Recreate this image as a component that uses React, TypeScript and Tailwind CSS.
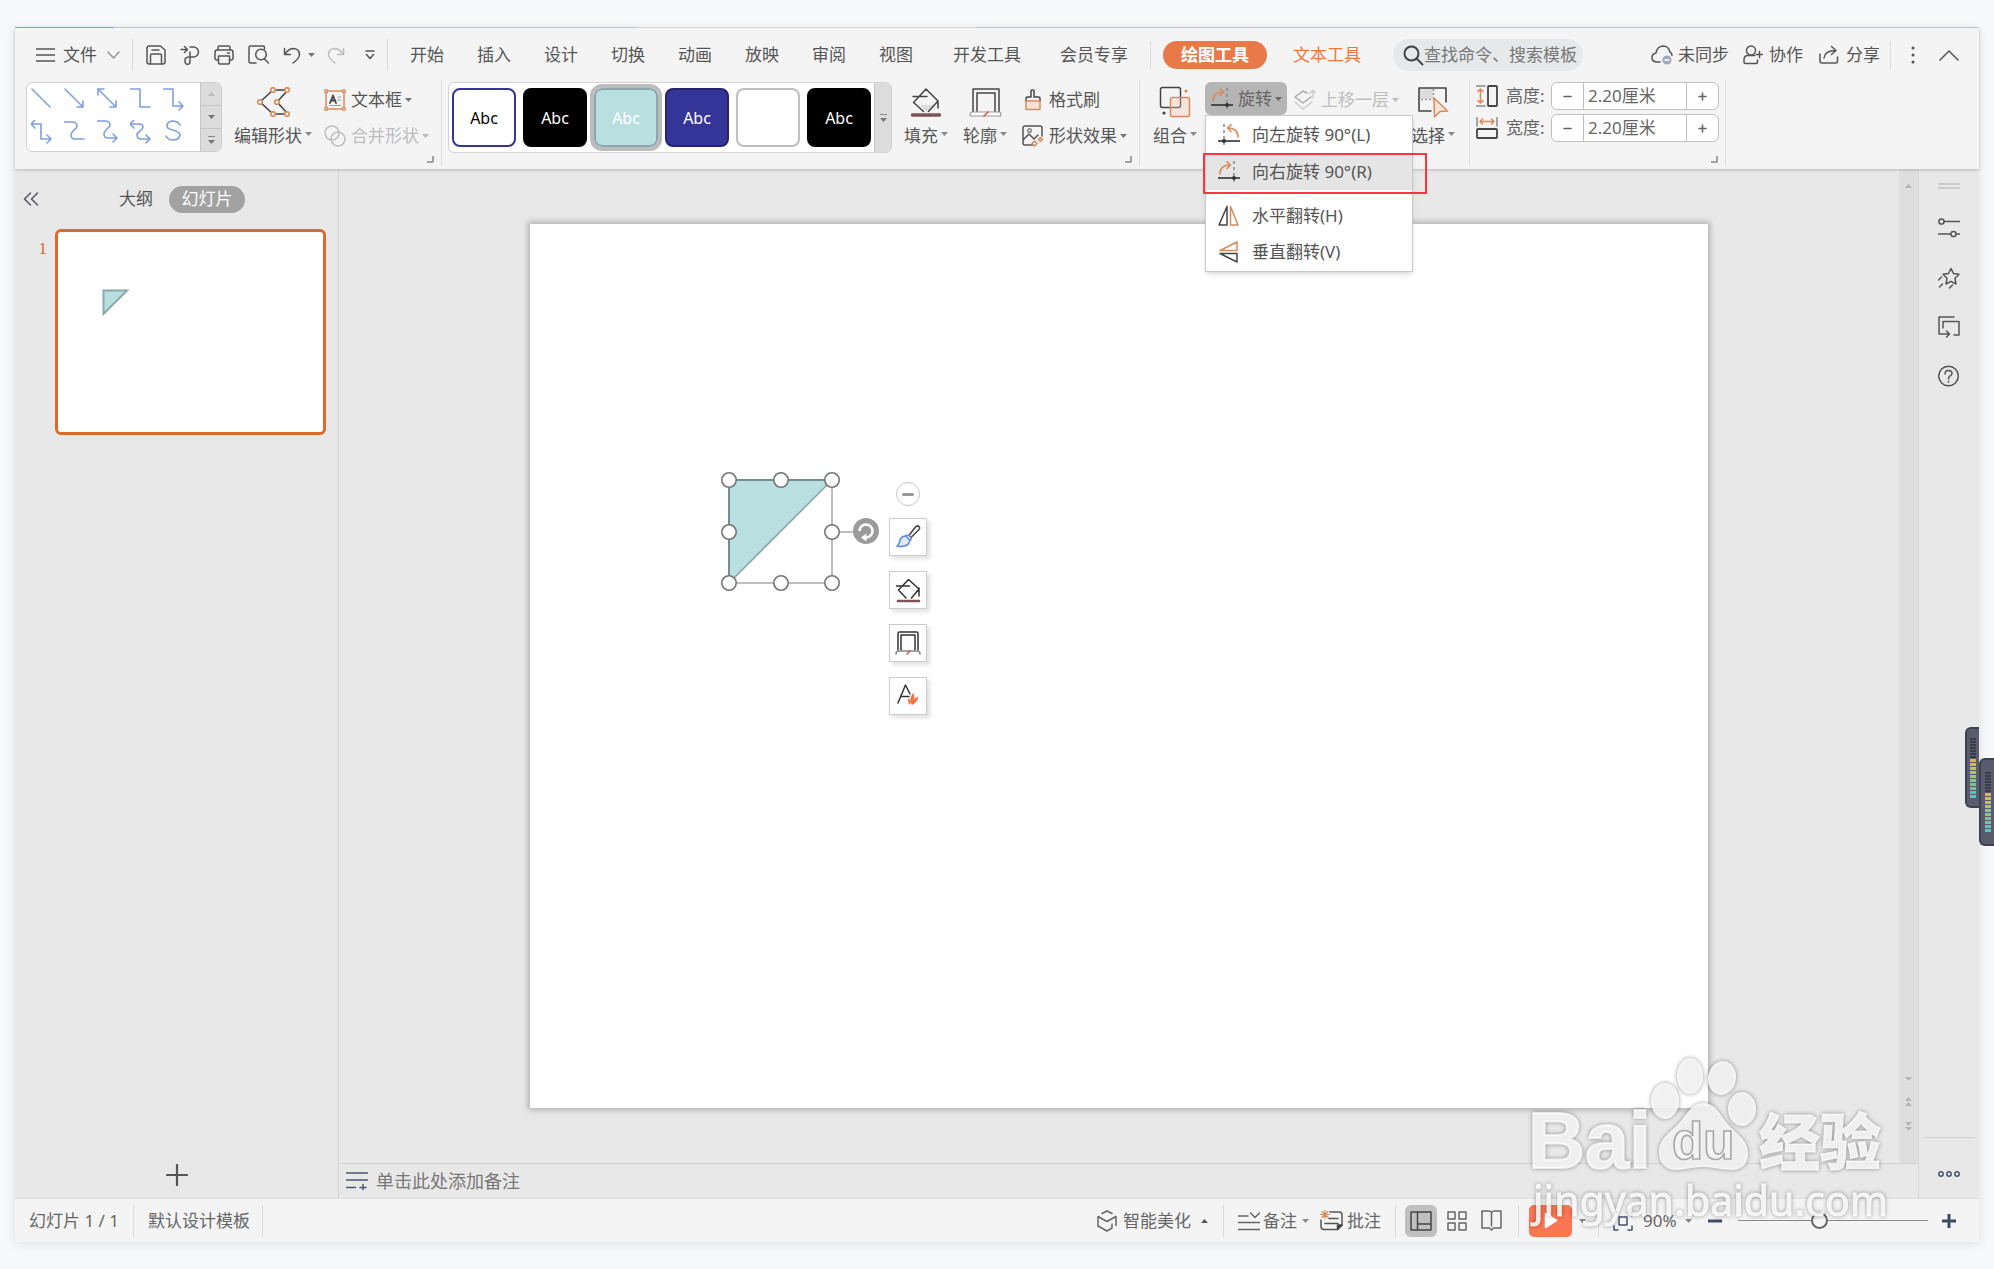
import type { ReactNode } from 'react'

interface IconProps {
  w?: number
  h?: number
  className?: string
  children: ReactNode
}

function Icon({ w = 22, h = 22, className = '', children }: IconProps) {
  return (
    <svg
      width={w}
      height={h}
      viewBox={`0 0 ${w} ${h}`}
      fill="none"
      stroke="currentColor"
      strokeWidth="1.5"
      strokeLinecap="round"
      strokeLinejoin="round"
      className={`shrink-0 ${className}`}
      aria-hidden="true"
    >
      {children}
    </svg>
  )
}

const ORANGE = '#d98a5b'

function Caret({ up = false, className = 'text-[#777]' }: { up?: boolean; className?: string }) {
  return (
    <Icon w={7} h={4} className={className}>
      <path d={up ? 'M0 4h7L3.500 0z' : 'M0 0h7L3.500 4z'} fill="currentColor" stroke="none" />
    </Icon>
  )
}

function Divider({ className = '' }: { className?: string }) {
  return <div className={`w-px shrink-0 bg-[#dcdcdc] ${className}`} />
}

/* ---------- 标签栏 ---------- */

const tabs = ['开始', '插入', '设计', '切换', '动画', '放映', '审阅', '视图']

function TabBar() {
  return (
    <div className="flex h-[52px] items-center pt-[2px] pr-5 pl-[21px] whitespace-nowrap">
      <button className="flex items-center">
        <Icon w={19} h={14}><path d="M0 1h19M0 7h19M0 13h19" /></Icon>
        <span className="ml-2">文件</span>
        <Icon w={13} h={8} className="ml-[10px] text-[#999]"><path d="M1 1l5.500 6L12 1" /></Icon>
      </button>
      <Divider className="ml-3 h-8" />

      <div className="ml-[13px] flex items-center gap-[14px]">
        <button aria-label="保存">
          <Icon w={20} h={20}>
            <path d="M3 1h11.500L19 5v12q0 2-2 2H3q-2 0-2-2V3q0-2 2-2zM4.500 19v-8.500q0-1.500 1.500-1.500h8q1.500 0 1.500 1.500V19M6 5h7" />
          </Icon>
        </button>
        <button aria-label="输出为PDF">
          <Icon w={20} h={20}>
            <path d="M1 4.500h6M4.500 1.500l3 3-3 3M10 2h3.500a5 5 0 010 10H8.500M10 7v9.500a2.500 2.500 0 01-5 .5v-2q0-2.500 3.500-3" />
          </Icon>
        </button>
        <button aria-label="打印">
          <Icon w={20} h={20}>
            <path d="M4 5V2.500Q4 1 5.500 1h9Q16 1 16 2.500V5M4 15H3q-2 0-2-2V7.500Q1 5 3 5h14q2 0 2 2.500V13q0 2-2 2h-1M4.500 11h11v6.500q0 1.500-1.500 1.500H6q-1.500 0-1.500-1.500zM13.500 8h2" />
          </Icon>
        </button>
        <button aria-label="打印预览">
          <Icon w={21} h={20}>
            <path d="M8 18H2.500Q1 18 1 16.500v-14Q1 1 2.500 1H15q1.500 0 1.500 1.500V4M16.500 14l4 4" />
            <circle cx="13" cy="9.500" r="5.300" />
          </Icon>
        </button>
      </div>
      <button aria-label="撤销" className="ml-[14px] flex items-center gap-[7px]">
        <Icon w={18} h={18}><path d="M1.500 2.500v6h6M2 8.500Q5 3 10 2.500q6 0 6.500 6Q16 13 10 17" /></Icon>
        <Caret />
      </button>
      <button aria-label="恢复" className="ml-3 text-[#bdbdbd]">
        <Icon w={18} h={18}><path d="M16.500 2.500v6h-6M16 8.500Q13 3 8 2.500q-6 0-6.500 6Q2 13 8 17" /></Icon>
      </button>
      <button aria-label="自定义快速访问工具栏" className="ml-5">
        <Icon w={10} h={10}><path d="M1 1h8M1.500 4.500L5 8.500l3.500-4" /></Icon>
      </button>
      <Divider className="ml-3 h-8" />

      <nav className="ml-[22px] flex items-center gap-[33px]">
        {tabs.map(tab => <button key={tab}>{tab}</button>)}
      </nav>
      <button className="ml-10">开发工具</button>
      <button className="ml-[39px]">会员专享</button>
      <Divider className="ml-[22px] h-7" />
      <button className="ml-3 h-[28px] w-[104px] rounded-full bg-[#e87a4a] font-bold text-white">绘图工具</button>
      <button className="ml-[26px] text-[#f3763c]">文本工具</button>

      <label className="ml-8 flex h-8 w-[190px] items-center rounded-full bg-[#e6e8ea] pl-[10px]">
        <Icon w={21} h={21} className="text-[#444]">
          <circle cx="8.500" cy="8.500" r="7" strokeWidth="2" />
          <path d="M13.500 13.500l6 6" strokeWidth="2" />
        </Icon>
        <input
          aria-label="查找命令、搜索模板"
          placeholder="查找命令、搜索模板"
          className="w-full min-w-0 bg-transparent outline-none placeholder:text-[#777]"
        />
      </label>

      <button className="ml-auto flex items-center gap-[5px]">
        <Icon w={22} h={20}>
          <path d="M9 17H5.500Q1 16.500 1 12.500 1 9 5 8q1-6.500 7-7 5.500 0 7 6 2 1 2 3.500" />
          <circle cx="16" cy="15" r="4.600" fill="#9fa9bd" stroke="none" />
          <path d="M14 15h4" stroke="#fff" />
        </Icon>
        未同步
      </button>
      <button className="ml-[14px] flex items-center gap-[6px]">
        <Icon w={20} h={20}>
          <circle cx="8" cy="5.500" r="4.500" />
          <path d="M12 10.500h-8Q1 11 1 15v2q0 1.500 1.500 1.500H13q1.500 0 1.500-1.500v-2M13.500 9.500h6M16.500 6.500v6" />
        </Icon>
        协作
      </button>
      <button className="ml-4 flex items-center gap-[7px]">
        <Icon w={20} h={20}>
          <path d="M1 9v7q0 2 2 2h14q1.500 0 1.500-2v-4M5 13Q6 5.500 16.500 5.500M12.500 1.500l4.500 4-4.500 4" />
        </Icon>
        分享
      </button>
      <Divider className="ml-[10px] h-7" />
      <button aria-label="更多" className="ml-5">
        <Icon w={4} h={18}>
          <g fill="currentColor" stroke="none">
            <circle cx="2" cy="2" r="1.500" /><circle cx="2" cy="9" r="1.500" /><circle cx="2" cy="16" r="1.500" />
          </g>
        </Icon>
      </button>
      <button aria-label="隐藏功能区" className="ml-6">
        <Icon w={20} h={12}><path d="M1 11l9-9 9 9" /></Icon>
      </button>
    </div>
  )
}

/* ---------- 功能区 ---------- */

function Group({ corner = false, className = '', children }: { corner?: boolean; className?: string; children: ReactNode }) {
  return (
    <div className={`relative flex h-[85px] items-start border-r border-[#dedede] pt-[2px] ${className}`}>
      {children}
      {corner && (
        <Icon w={7} h={7} className="absolute right-[7px] bottom-[2px] text-[#888]">
          <path d="M6 0v6H0" strokeLinecap="butt" />
        </Icon>
      )}
    </div>
  )
}

function BigButton({ icon, label, className = '' }: { icon: ReactNode; label: string; className?: string }) {
  return (
    <button className={`flex flex-col items-center whitespace-nowrap ${className}`}>
      <span className="flex h-9 items-center pt-[3px]">{icon}</span>
      <span className="flex h-9 items-center gap-[3px]">{label}<Caret className="mb-1 text-[#888]" /></span>
    </button>
  )
}

function SmallButton({ icon, label, caret = true, disabled = false }: { icon: ReactNode; label: string; caret?: boolean; disabled?: boolean }) {
  return (
    <button disabled={disabled} className={`flex h-9 items-center whitespace-nowrap ${disabled ? 'text-[#bdbdbd]' : ''}`}>
      {icon}
      <span className="ml-[5px]">{label}</span>
      {caret && <Caret className={disabled ? 'ml-[3px] text-[#bbb]' : 'ml-[3px] text-[#777]'} />}
    </button>
  )
}

const connectors = [
  'M1 1l18 18',
  'M1 1l18 18M19 13v6h-6',
  'M1 1l18 18M19 13v6h-6M1 7V1h6',
  'M0 1h10v18h10',
  'M0 1h10v17h9M16 14l4 4-4 4',
  'M1 4h9v15h9M16 15l4 4-4 4M4 0L0 4l4 4',
  'M0 2h8q5 0 5 4 0 2-3 4-3 3-3 5 0 4 4 4h9',
  'M0 1h8q5 0 5 4 0 2-3 4-3 3-3 5 0 4 4 4h8M16 14l4 4-4 4',
  'M1 4h8q4 0 4 3 0 2-3 4-3 2-3 4 0 4 4 4h8M16 15l4 4-4 4M4 0L0 4l4 4',
  'M17 5Q15 1 9 1 4 2 4 6q0 3 6 4 7 2 7 5-1 5-7 5-5 0-7-4',
]

const styles = [
  { name: '样式1', box: 'border-[#35349a] bg-white text-black' },
  { name: '样式2', box: 'border-black bg-black text-white' },
  { name: '样式3', box: 'border-[#8aa9ac] bg-[#b9dfe1] text-white outline-4 outline-[#bcbcbc]' },
  { name: '样式4', box: 'border-[#25246f] bg-[#353499] text-white' },
  { name: '样式5', box: 'border-[#bfbfbf] bg-white text-white' },
  { name: '样式6', box: 'border-black bg-black text-white' },
]

function RotateIcon({ left = false }: { left?: boolean }) {
  return (
    <Icon w={22} h={22}>
      {left ? (
        <>
          <path d="M6 0v21" strokeDasharray="3 3" stroke="#888" strokeLinecap="butt" />
          <path d="M0 17h22" stroke="#333" strokeWidth="1.600" strokeLinecap="butt" />
          <circle cx="6" cy="17" r="2" fill="#333" stroke="none" />
          <path d="M20 13Q20 4 9.500 4M13 0.800L9.500 4l3.500 3.500" stroke={ORANGE} strokeWidth="1.600" />
        </>
      ) : (
        <>
          <path d="M16 0v21" strokeDasharray="3 3" stroke="#888" strokeLinecap="butt" />
          <path d="M0 17h22" stroke="#333" strokeWidth="1.600" strokeLinecap="butt" />
          <circle cx="16" cy="17" r="2" fill="#333" stroke="none" />
          <path d="M2 13Q2 4 12.500 4M9 0.800L12.500 4 9 7.500" stroke={ORANGE} strokeWidth="1.600" />
        </>
      )}
    </Icon>
  )
}

function RotateMenu() {
  return (
    <div className="absolute top-[33px] left-0 z-20 w-[208px] border border-[#c8c8c8] bg-white py-px shadow-md">
      <button className="flex h-9 w-full items-center gap-3 pl-3 text-left">
        <RotateIcon left />向左旋转 90°(L)
      </button>
      <button className="flex h-[37px] w-full items-center gap-3 bg-[#e5e5e5] pl-3 text-left">
        <RotateIcon />向右旋转 90°(R)
      </button>
      <div className="mt-2" />
      <button className="flex h-9 w-full items-center gap-3 pl-3 text-left">
        <Icon w={22} h={22}>
          <path d="M9 1.500V20H1z" stroke="#444" />
          <path d="M12.500 1.500V20H20z" stroke={ORANGE} />
        </Icon>
        水平翻转(H)
      </button>
      <button className="flex h-9 w-full items-center gap-3 pl-3 text-left">
        <Icon w={22} h={22}>
          <path d="M19 1v8.500H2z" stroke={ORANGE} />
          <path d="M19 21v-8.500H2z" stroke="#444" />
        </Icon>
        垂直翻转(V)
      </button>
      {/* 高亮框 */}
      <div className="pointer-events-none absolute top-[37px] -left-[3px] h-[41px] w-[224px] border-2 border-[#f7373a]" />
    </div>
  )
}

function SizeField({ id, label, icon }: { id: string; label: string; icon: ReactNode }) {
  return (
    <div className="flex h-7 items-center text-[#666]">
      {icon}
      <label htmlFor={id} className="ml-2 w-[45px]">{label}:</label>
      <div className="flex h-7 w-[168px] overflow-hidden rounded-md border border-[#bfbfbf] bg-white">
        <button aria-label={`减小${label}`} className="flex w-8 items-center justify-center border-r border-[#bfbfbf]">
          <Icon w={9} h={9}><path d="M1 4.500h7" strokeWidth="1.600" /></Icon>
        </button>
        <input id={id} defaultValue="2.20厘米" className="w-full min-w-0 flex-1 px-1 outline-none" />
        <button aria-label={`增大${label}`} className="flex w-8 items-center justify-center border-l border-[#bfbfbf]">
          <Icon w={9} h={9}><path d="M1 4.500h7M4.500 1v7" strokeWidth="1.600" /></Icon>
        </button>
      </div>
    </div>
  )
}

function Ribbon() {
  return (
    <div className="flex h-[89px]">
      <Group corner className="pr-3 pl-[11px]">
        <div className="flex h-[70px] w-[196px] overflow-hidden rounded-md border border-[#cfcfcf] bg-white">
          <div className="grid flex-1 grid-cols-5 content-start gap-y-2 px-1 pt-[5px] text-[#7f9fdf]">
            {connectors.map(d => (
              <button key={d} aria-label="线条" className="h-6">
                <Icon w={22} h={24}><path d={d} strokeWidth="1.600" /></Icon>
              </button>
            ))}
          </div>
          <div className="flex w-[21px] flex-col divide-y divide-[#c6c6c6] border-l border-[#c6c6c6] bg-[#dcdcdc]">
            <button aria-label="上一行" className="flex flex-1 items-center justify-center"><Caret up className="text-[#bbb]" /></button>
            <button aria-label="下一行" className="flex flex-1 items-center justify-center"><Caret /></button>
            <button aria-label="更多形状" className="flex flex-1 flex-col items-center justify-center gap-[3px]">
              <span className="h-px w-[7px] bg-[#888]" /><Caret />
            </button>
          </div>
        </div>
        <BigButton
          className="ml-3"
          label="编辑形状"
          icon={
            <Icon w={33} h={30}>
              <path d="M16 3h15L20 15l11 12H16L3 15z" stroke="#444" strokeWidth="1.600" />
              <g stroke={ORANGE} strokeWidth="1.600" fill="#f4f4f4">
                <circle cx="16" cy="3" r="2.300" /><circle cx="30" cy="3" r="2.300" /><circle cx="3" cy="15" r="2.300" />
                <circle cx="20" cy="15" r="2.300" /><circle cx="16" cy="27" r="2.300" /><circle cx="30" cy="27" r="2.300" />
              </g>
            </Icon>
          }
        />
        <div className="ml-3 flex flex-col items-start">
          <SmallButton
            label="文本框"
            icon={
              <Icon>
                <path d="M2 2h18v18H2z" stroke={ORANGE} />
                <g fill="#f4f4f4" stroke={ORANGE} strokeWidth="1.200">
                  <path d="M0.800 0.800h2.600v2.600H0.800zM18.600 0.800h2.600v2.600h-2.600zM0.800 18.600h2.600v2.600H0.800zM18.600 18.600h2.600v2.600h-2.600z" />
                </g>
                <path d="M6 14L9 6.500 12 14M7 11.500h4" stroke="#444" strokeWidth="1.800" />
                <path d="M14 8h2.500M14 11h2.500M6 16.500h10.500" stroke="#999" strokeWidth="1.200" />
              </Icon>
            }
          />
          <SmallButton
            disabled
            label="合并形状"
            icon={<Icon><circle cx="8" cy="8" r="7" /><circle cx="14" cy="14" r="7" /></Icon>}
          />
        </div>
      </Group>

      <Group corner className="pr-3 pl-[6px]">
        <div className="flex h-[71px] w-[444px] overflow-hidden rounded-md border border-[#d2d2d2] bg-white">
          <div className="flex flex-1 items-center gap-[7px] pl-[3px]">
            {styles.map(s => (
              <button key={s.name} aria-label={s.name} className={`h-[59px] w-[64px] shrink-0 rounded-lg border-2 text-base ${s.box}`}>
                Abc
              </button>
            ))}
          </div>
          <button aria-label="更多样式" className="flex w-[17px] flex-col items-center justify-center gap-[3px] border-l border-[#c6c6c6] bg-[#dcdcdc]">
            <span className="h-px w-[7px] bg-[#888]" /><Caret />
          </button>
        </div>
        <BigButton
          className="ml-3"
          label="填充"
          icon={
            <Icon w={30} h={30}>
              <path d="M9 18h14l-7 7z" fill="#ddd" stroke="none" />
              <path d="M12.500 24.500L2.500 15.500 15 2l12 12-9.500 10.500M2 9.500h14M27 14v7" stroke="#444" />
              <path d="M1.500 28h27" stroke="#7d5359" strokeWidth="3.400" />
            </Icon>
          }
        />
        <BigButton
          className="ml-[15px]"
          label="轮廓"
          icon={
            <Icon w={33} h={30}>
              <path d="M4 25V2h26v23M8 25V6h18v19" stroke="#444" />
              <path d="M3 25h27q2 0 2 2.500t-2 1.500H3q-2 .5-2-1.500T3 25z" fill="#fff" stroke="#999" strokeWidth="1.200" />
              <path d="M15 29l4-4" stroke="#e04a4a" />
            </Icon>
          }
        />
        <div className="ml-[15px] flex flex-col items-start">
          <SmallButton
            caret={false}
            label="格式刷"
            icon={
              <Icon>
                <path d="M4 12V9.500Q4 8 5.500 8H9V2q0-1 1-1h1q1 0 1 1v6h4.500Q18 8 18 9.500V12" stroke="#444" />
                <path d="M4 12h14v8.500H4z" fill="#f7e3d8" stroke={ORANGE} />
              </Icon>
            }
          />
          <SmallButton
            label="形状效果"
            icon={
              <Icon>
                <path d="M11 20H3q-2 0-2-2V3q0-2 2-2h15q2 0 2 2v8M1 15l6-6 5 5 4-4" stroke="#555" />
                <circle cx="7.500" cy="5.500" r="1.800" stroke="#888" />
                <g stroke={ORANGE}>
                  <path d="M12.500 16l2.500 2.500-2.500 2.500L10 18.500zM18.500 12.500l2 2-2 2-2-2z" />
                </g>
              </Icon>
            }
          />
        </div>
      </Group>

      <Group className="pr-[14px] pl-[13px]">
        <BigButton
          label="组合"
          icon={
            <Icon w={32} h={32}>
              <rect x="1.500" y="1.500" width="20" height="20" rx="2" stroke="#444" />
              <rect x="11.500" y="11.500" width="19" height="19" rx="2" stroke={ORANGE} fill="#f3c7ae" fillOpacity="0.350" />
              <circle cx="27" cy="5" r="1.600" fill={ORANGE} stroke="none" />
              <circle cx="5" cy="27" r="1.600" fill="#444" stroke="none" />
            </Icon>
          }
        />
        <div className="relative ml-2">
          <button className="flex h-[33px] w-[82px] items-center rounded-md bg-[#b5b5b5] pl-[6px] whitespace-nowrap text-[#666]">
            <RotateIcon /><span className="ml-[5px]">旋转</span><Caret className="ml-[3px] text-[#666]" />
          </button>
          <RotateMenu />
        </div>
        <div className="ml-[7px]">
          <SmallButton
            disabled
            label="上移一层"
            icon={
              <Icon>
                <path d="M13 4L9 2 1 8l8 6 8-6" stroke="#aaa" />
                <path d="M1 13l8 7 9-7M19 9V1M16 4l3-3 3 3" stroke="#ccc" />
              </Icon>
            }
          />
        </div>
        <BigButton
          className="ml-3"
          label="选择"
          icon={
            <Icon w={32} h={32}>
              <path d="M2 2h14v11H2z" fill="#ddd" stroke="none" />
              <path d="M14 25H2V2h27v14" stroke="#444" strokeWidth="1.600" />
              <path d="M4 13.500h13M16.500 3v9" strokeDasharray="2 2" stroke="#999" strokeLinecap="butt" />
              <path d="M17 12l13.500 13-7.500.5-5.500 5.500z" stroke={ORANGE} fill="#f7e3d8" />
            </Icon>
          }
        />
      </Group>

      <Group corner className="flex-col gap-1 pr-[6px] pl-[6px]">
        <SizeField
          id="shape-height"
          label="高度"
          icon={
            <Icon>
              <path d="M0.500 1H9M0.500 21H9" stroke="#888" />
              <path d="M4.500 4v14M2 6.500L4.500 4 7 6.500M2 15.500L4.500 18 7 15.500" stroke={ORANGE} strokeWidth="1.600" />
              <rect x="12" y="1" width="9" height="20" rx="1" stroke="#444" strokeWidth="1.800" />
            </Icon>
          }
        />
        <SizeField
          id="shape-width"
          label="宽度"
          icon={
            <Icon>
              <path d="M1 0.500V9M21 0.500V9" stroke="#888" />
              <path d="M4 4.500h14M6.500 2L4 4.500 6.500 7M15.500 2L18 4.500 15.500 7" stroke={ORANGE} strokeWidth="1.600" />
              <rect x="1" y="12" width="20" height="9" rx="1" stroke="#444" strokeWidth="1.800" />
            </Icon>
          }
        />
      </Group>
    </div>
  )
}

/* ---------- 左侧幻灯片窗格 ---------- */

function SlidePanel() {
  return (
    <aside className="flex w-[324px] shrink-0 flex-col border-r border-[#d6d6d6]">
      <div className="flex h-[60px] items-center pl-2">
        <button aria-label="收起" className="text-[#556]">
          <Icon w={16} h={14}><path d="M7.500 1L1.500 7l6 6M14.500 1L8.500 7l6 6" /></Icon>
        </button>
        <button className="ml-20">大纲</button>
        <button className="ml-4 h-[27px] w-[76px] rounded-full bg-[#a2a2a2] text-white">幻灯片</button>
      </div>
      <div className="flex pr-3">
        <span className="mt-2 w-10 pr-2 text-right font-['Liberation_Serif',serif] text-[#d96b2c]">1</span>
        <button aria-label="幻灯片 1" className="flex aspect-[271/206] flex-1 items-start rounded-md border-[3px] border-[#d96b2c] bg-white pt-[57px] pl-[44px]">
          <Icon w={27} h={27}>
            <path d="M1.500 1.500h23.500L1.500 25z" fill="#b9dfe1" stroke="#8aa9ac" strokeWidth="2" strokeLinejoin="miter" />
          </Icon>
        </button>
      </div>
      <button aria-label="新建幻灯片" className="mt-auto mb-3 self-center text-[#555]">
        <Icon w={22} h={22}><path d="M1 11h20M11 1v20" strokeWidth="2.200" /></Icon>
      </button>
    </aside>
  )
}

/* ---------- 画布 ---------- */

const handles = [[10, 10], [62, 10], [113, 10], [10, 62], [113, 62], [10, 113], [62, 113], [113, 113]]

const floatTools = [
  {
    name: '形状样式',
    icon: (
      <Icon w={26} h={26}>
        <path d="M14 11.500l6.500-8.500q2-2 3.500-.5t-.5 3.500L16 13.500" stroke="#444" />
        <path d="M11 11.500q3-1 4.500 1.500t-1.500 4.500" stroke="#5c8ae6" />
        <path d="M2 22Q4 21 5 16q1.500-4 6-4l3.500 4q0 5-5 6T2 22z" stroke="#5c8ae6" fill="#dfe9fb" />
      </Icon>
    ),
  },
  {
    name: '填充',
    icon: (
      <Icon w={26} h={26}>
        <path d="M11 21L3.500 13 13.500 2.500 24 12l-7.500 9M1.500 9h13M24 11v8" stroke="#333" />
        <path d="M3 24h21" stroke="#7d5359" strokeWidth="2.600" />
      </Icon>
    ),
  },
  {
    name: '轮廓',
    icon: (
      <Icon w={26} h={26}>
        <path d="M3 20V3.500Q3 2 4.500 2h17Q23 2 23 3.500V20M6 20V5h14v15" stroke="#333" />
        <path d="M1 24q0-2.500 2-3h20q2 .5 2 3" stroke="#888" />
        <path d="M12 24l3-3" stroke="#e04a4a" />
      </Icon>
    ),
  },
  {
    name: '文字效果',
    icon: (
      <Icon w={26} h={26}>
        <path d="M3 20L10.500 2 15 11M6 13.500h8" stroke="#333" />
        <path d="M17 22q-4-5 1-12 2.500 4 .5 7 2-3 5-3.500-1 6-6.500 8.500zM15.500 22q-4-3-1.500-7 1.500 2 1.500 7z" fill="#f5703f" stroke="none" />
      </Icon>
    ),
  },
]

function Canvas() {
  return (
    <div className="flex min-h-0 flex-1 items-center justify-center">
      <div className="relative aspect-[4/3] w-[75.5%] bg-white shadow-[0_0_6px_2px_rgba(0,0,0,0.25)]">
        {/* 选中的直角三角形 */}
        <div className="absolute top-[246px] left-[189px]">
          <Icon w={162} h={124}>
            <path d="M10 10h103v103H10z" stroke="#aaa" />
            <path d="M10 10h103L10 113z" fill="#b9dfe1" stroke="#8aa9ac" strokeWidth="1.600" />
            <path d="M10 113V10h103" stroke="#6d8586" strokeWidth="1.600" />
            <path d="M120 62h16" stroke="#aaa" />
            {handles.map(([x, y]) => (
              <circle key={`${x}-${y}`} cx={x} cy={y} r="7.200" fill="#fff" stroke="#757575" strokeWidth="1.600" />
            ))}
            <circle cx="147" cy="61" r="13" fill="#9b9b9b" stroke="none" />
            <path d="M140.500 61a6.500 6.500 0 116.500 6.500" stroke="#fff" strokeWidth="2.600" strokeLinecap="butt" />
            <path d="M147.500 63.500v8l-5.500-4z" fill="#fff" stroke="none" />
          </Icon>
        </div>
        {/* 浮动工具 */}
        <div className="absolute top-[258px] left-[359px] flex flex-col items-center">
          <button aria-label="收起工具" className="mb-3 flex size-6 items-center justify-center rounded-full border border-[#c8c8c8] bg-white">
            <span className="h-[3px] w-3 rounded bg-[#999]" />
          </button>
          <div className="flex flex-col gap-[15px]">
            {floatTools.map(tool => (
              <button key={tool.name} aria-label={tool.name} className="flex size-[38px] items-center justify-center border border-[#ccc] bg-white shadow-[3px_3px_4px_rgba(0,0,0,0.12)]">
                {tool.icon}
              </button>
            ))}
          </div>
        </div>
      </div>
    </div>
  )
}

function ScrollBar() {
  return (
    <div className="flex w-[19px] shrink-0 flex-col items-center bg-[#dedede] pt-[15px] pb-8">
      <Caret up className="text-[#b5b5b5]" />
      <button aria-label="向下滚动" className="mt-auto"><Caret className="text-[#b5b5b5]" /></button>
      <button aria-label="上一页" className="mt-4 flex flex-col gap-px">
        <Caret up className="text-[#b5b5b5]" /><Caret up className="text-[#b5b5b5]" />
      </button>
      <button aria-label="下一页" className="mt-4 flex flex-col gap-px">
        <Caret className="text-[#b5b5b5]" /><Caret className="text-[#b5b5b5]" />
      </button>
    </div>
  )
}

function TaskPane() {
  return (
    <aside className="flex w-[61px] shrink-0 flex-col items-center border-l border-[#d9d9d9] pt-[14px] text-[#555]">
      <div className="h-[6px] w-[22px] border-y-2 border-[#ccc]" />
      <button aria-label="属性" className="mt-7">
        <Icon>
          <circle cx="3.500" cy="4.500" r="2.600" /><path d="M6.500 4.500H22M0 17h12.500M18.500 17H22" />
          <circle cx="15.500" cy="17" r="2.600" />
        </Icon>
      </button>
      <button aria-label="动画" className="mt-7">
        <Icon>
          <path d="M13 1.500l2.500 5 5.500.8-4 4 1 5.700-5-2.700-5 2.700 1-5.700-4-4 5.500-.8zM0.500 13l3-3M1.500 20l3-3M11.500 21l3-3" />
        </Icon>
      </button>
      <button aria-label="切换窗格" className="mt-[27px]">
        <Icon>
          <path d="M16 1H1v17h10M8.500 15l3 3-3 3M5 12V5.500h16V19h-5" />
        </Icon>
      </button>
      <button aria-label="帮助" className="mt-[27px]">
        <Icon>
          <circle cx="10.500" cy="11" r="9.800" />
          <path d="M7 9q0-3.500 3.500-3.500T14 8.500q0 1.500-2 2.500-1.500 1-1.500 3" />
          <circle cx="10.500" cy="16.800" r="1" fill="currentColor" stroke="none" />
        </Icon>
      </button>
      <div className="mt-auto h-px w-[52px] bg-[#d0d0d0]" />
      <button aria-label="更多窗格" className="mt-8 mb-5 text-[#4a5570]">
        <Icon w={22} h={8}>
          <circle cx="3" cy="4" r="2.200" /><circle cx="11" cy="4" r="2.200" /><circle cx="19" cy="4" r="2.200" />
        </Icon>
      </button>
    </aside>
  )
}

/* ---------- 状态栏 ---------- */

function StatusBar() {
  return (
    <footer className="flex h-11 shrink-0 items-center border-t border-[#e0e0e0] bg-[#f4f4f4] pr-[23px] pl-[14px] whitespace-nowrap text-[#666]">
      <span>幻灯片 1 / 1</span>
      <Divider className="ml-[14px] h-8" />
      <span className="ml-[14px]">默认设计模板</span>
      <Divider className="ml-3 h-8" />

      <button className="ml-auto flex items-center">
        <Icon w={20} h={22}>
          <path d="M5 3.500l5-2.500 5 2.500M1 6.500l9 5 9-5M1 7v9l9 5 5-3v-4M19 7v8.500" />
        </Icon>
        <span className="ml-[6px]">智能美化</span>
        <Caret up className="ml-[10px] text-[#555]" />
      </button>
      <Divider className="ml-[15px] h-8" />
      <button className="ml-[14px] flex items-center">
        <Icon w={22} h={20}>
          <path d="M0 5h10M0 11.500h22M0 18.500h22M12.500 2l4.500 4.500L21.500 2" />
        </Icon>
        <span className="ml-[3px]">备注</span>
        <Caret className="ml-[5px] text-[#888]" />
      </button>
      <button className="ml-[11px] flex items-center">
        <Icon w={23} h={21}>
          <path d="M10 2h9q3 0 3 3v10l-4.500 4.500H4q-3 0-3-3V10M9 8.500h9M5 13.500h13" stroke="#555" />
          <path d="M22 15l-4.500 4.500V15z" fill="#444" stroke="#444" />
          <path d="M5 0v9M0.500 4.500h9M2 1.500l6 6M8 1.500l-6 6" stroke={ORANGE} strokeWidth="1.200" />
        </Icon>
        <span className="ml-1">批注</span>
      </button>
      <Divider className="ml-[14px] h-8" />
      <button aria-label="普通视图" className="ml-[9px] flex size-8 items-center justify-center rounded-md bg-[#c0c0c0] text-[#444]">
        <Icon w={22} h={20}><path d="M1 1h20v18H1zM7.500 1v18M7.500 13H21" /></Icon>
      </button>
      <button aria-label="幻灯片浏览" className="ml-[10px]">
        <Icon w={20} h={20}><path d="M1 1h7v7H1zM12 1h7v7h-7zM1 12h7v7H1zM12 12h7v7h-7z" /></Icon>
      </button>
      <button aria-label="阅读视图" className="ml-[14px]">
        <Icon w={21} h={21}><path d="M10.500 3Q10 1 8 1H1v17h7.500l2 2 2-2H20V1h-7q-2 0-2.500 2zv13" /></Icon>
      </button>
      <Divider className="ml-4 h-8" />
      <button aria-label="放映" className="ml-[10px] flex h-8 w-[43px] items-center justify-center rounded-[5px] bg-[#fb7753]">
        <Icon w={14} h={17}><path d="M1.500 1.500l11 7-11 7z" fill="#fff" stroke="#fff" /></Icon>
      </button>
      <Caret className="ml-[7px] text-[#888]" />
      <Divider className="ml-3 h-8" />
      <button aria-label="适应窗口" className="ml-[14px] text-[#44506b]">
        <Icon w={20} h={20}>
          <path d="M1 5V1h4M15 1h4v4M19 15v4h-4M5 19H1v-4M6 6h8v8H6z" />
        </Icon>
      </button>
      <button className="ml-[10px] flex items-center">
        <span className="w-[38px] text-left">90%</span><Caret className="ml-[4px] text-[#888]" />
      </button>
      <button aria-label="缩小" className="ml-4 text-[#3f4a66]">
        <Icon w={14} h={14}><path d="M0 7h14" strokeWidth="3" strokeLinecap="butt" /></Icon>
      </button>
      <input
        type="range"
        aria-label="显示比例"
        min="0"
        max="100"
        defaultValue="42"
        className="ml-4 h-5 w-[190px] appearance-none bg-[linear-gradient(#8a8a8a,#8a8a8a)] bg-[length:100%_1px] bg-center bg-no-repeat [&::-webkit-slider-thumb]:size-[17px] [&::-webkit-slider-thumb]:appearance-none [&::-webkit-slider-thumb]:rounded-full [&::-webkit-slider-thumb]:border-2 [&::-webkit-slider-thumb]:border-[#666] [&::-webkit-slider-thumb]:bg-[#f4f4f4]"
      />
      <button aria-label="放大" className="ml-[14px] text-[#3f4a66]">
        <Icon w={14} h={14}><path d="M0 7h14M7 0v14" strokeWidth="3" strokeLinecap="butt" /></Icon>
      </button>
    </footer>
  )
}

/* ---------- 水印与音量条 ---------- */

function Watermark() {
  return (
    <svg
      width="380"
      height="180"
      viewBox="0 0 380 180"
      fill="#fff"
      fillOpacity="0.85"
      className="pointer-events-none absolute right-[94px] bottom-[36px] z-30 drop-shadow-[0_0_2px_rgba(0,0,0,0.45)]"
    >
      <text x="8" y="115" fontSize="79" fontWeight="700" fontFamily="Liberation Sans, sans-serif" stroke="#fff" strokeWidth="2" strokeOpacity="0.700">Bai</text>
      <ellipse cx="145" cy="48" rx="14" ry="18" />
      <ellipse cx="170" cy="23" rx="13" ry="18" />
      <ellipse cx="202" cy="25" rx="14" ry="17" transform="rotate(10 202 25)" />
      <ellipse cx="222" cy="56" rx="14" ry="17" />
      <path d="M183 50c12 0 16 10 24 20 10 12 21 16 21 31 0 12-8 16-17 16-10 0-18-3-28-3s-18 3-26 3c-11 0-18-6-18-18 0-14 12-20 21-30 8-9 12-19 23-19z" />
      <text x="152" y="106" fontSize="51" fontWeight="700" fontFamily="Liberation Sans, sans-serif" fill="#f4f4f4" stroke="#a8a8a8" strokeWidth="1.600">du</text>
      <text x="239" y="112" fontSize="61" fontWeight="900" fontFamily="Noto Sans CJK SC, sans-serif" stroke="#fff" strokeWidth="1" strokeOpacity="0.700">经验</text>
      <text x="13" y="163" fontSize="41" fontFamily="Noto Sans, sans-serif" stroke="#fff" strokeWidth="1" strokeOpacity="0.700">jingyan.baidu.com</text>
    </svg>
  )
}

const levels = ['#d7b64a', '#cdbb4e', '#bfc157', '#aec562', '#9bc66f', '#87c67f', '#74c591', '#60c6a4', '#4fc9b5', '#43cfc4']

function Meter({ className }: { className: string }) {
  return (
    <div className={`absolute z-30 flex flex-col items-center justify-center gap-px rounded-l-md border-2 border-r-0 border-[#3e414e] bg-[#585c6c] ${className}`}>
      {levels.slice(3).map(c => <span key={`off-${c}`} className="h-[2px] w-[6px] bg-[#3a3c48]" />)}
      {levels.map(c => <span key={c} className="h-[3px] w-[6px]" style={{ backgroundColor: c }} />)}
    </div>
  )
}

export default function App() {
  return (
    <div className="relative flex h-screen flex-col overflow-hidden bg-[#f7f8fa] px-[15px] pt-[27px] pb-[27px] font-['Noto_Sans','Noto_Sans_CJK_SC',sans-serif] text-[17px] leading-6 text-[#555]">
      <div className="flex h-px">
        <div className="w-[99px] bg-[#8fa6df]" />
        <div className="w-[523px] bg-[#c9d3e0]" />
        <div className="w-[339px] bg-[#e8e8e8]" />
        <div className="flex-1 bg-[#c9d3e0]" />
      </div>
      <main className="flex min-h-0 flex-1 flex-col bg-[#e8e8e8] shadow-[0_2px_10px_rgba(0,0,0,0.1)]">
        <header className="z-10 bg-[#f4f4f4] shadow-[0_1px_3px_rgba(0,0,0,0.2)]">
          <TabBar />
          <Ribbon />
        </header>
        <div className="flex min-h-0 flex-1">
          <SlidePanel />
          <section className="flex min-w-0 flex-1 flex-col">
            <div className="flex min-h-0 flex-1">
              <Canvas />
              <ScrollBar />
            </div>
            <button className="flex h-[35px] items-center gap-2 border-t border-[#d2d2d2] pl-[7px] text-left text-lg text-[#777]">
              <Icon w={22} h={18} className="text-[#4a5570]">
                <path d="M0.500 1h21M0.500 8h21M0.500 15.500h9M14 15.500h6M17 12.500v6" />
              </Icon>
              单击此处添加备注
            </button>
          </section>
          <TaskPane />
        </div>
        <StatusBar />
      </main>
      <Watermark />
      <Meter className="top-[727px] right-[15px] h-[81px] w-[14px]" />
      <Meter className="top-[758px] right-0 h-[88px] w-[15px]" />
    </div>
  )
}
